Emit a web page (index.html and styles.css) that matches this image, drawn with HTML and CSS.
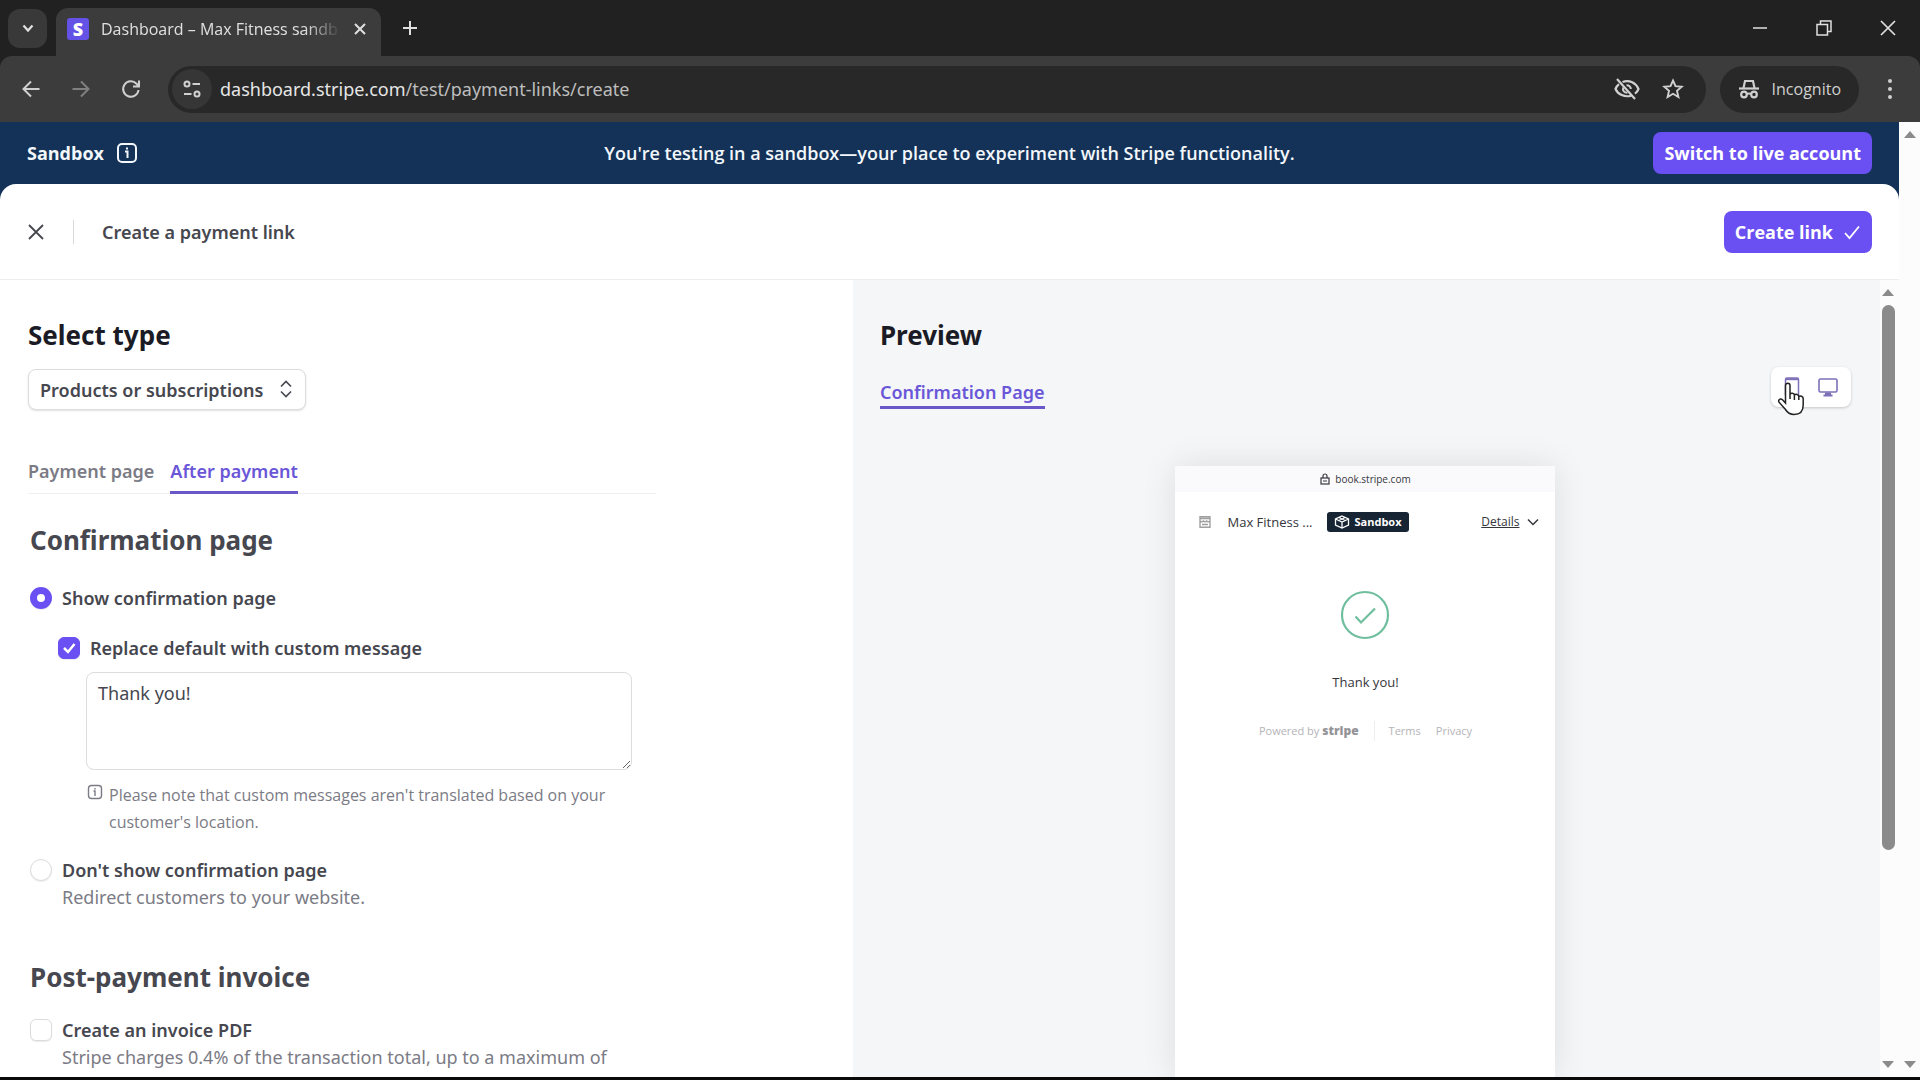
FILE: index.html
```html
<!DOCTYPE html>
<html lang="en">
<head>
    <meta charset="UTF-8">
    <meta name="viewport" content="width=device-width, initial-scale=1.0">
    <title>Dashboard – Max Fitness sandbox</title>
    <link rel="stylesheet" href="styles.css">
</head>
<body>
    <!-- browser tabs -->
    <div class="tab-strip">
        <button class="tab-search" aria-label="Search tabs">
            <svg width="14" height="14" viewBox="0 0 14 14"><path d="M2.500 4.500l4.500 5 4.500-5" stroke-width="2.200"/></svg>
        </button>
        <div class="browser-tab">
            <span class="favicon">S</span>
            <span class="tab-title">Dashboard – Max Fitness sandb</span>
            <button class="icon-btn" aria-label="Close tab">
                <svg width="14" height="14" viewBox="0 0 14 14"><path d="M2 2l10 10M12 2L2 12" stroke-width="2"/></svg>
            </button>
        </div>
        <button class="icon-btn new-tab" aria-label="New tab">
            <svg width="16" height="16" viewBox="0 0 16 16"><path d="M8 1v14M1 8h14" stroke-width="2"/></svg>
        </button>
        <div class="window-buttons">
            <button class="icon-btn" aria-label="Minimize">
                <svg width="16" height="16" viewBox="0 0 16 16"><path d="M1 8h14" stroke-width="1.500"/></svg>
            </button>
            <button class="icon-btn" aria-label="Restore">
                <svg width="16" height="16" viewBox="0 0 16 16"><path d="M1 4.500h10.500V15H1zM4.500 4.500V1H15v10.500h-3.500" stroke-width="1.500"/></svg>
            </button>
            <button class="icon-btn" aria-label="Close">
                <svg width="16" height="16" viewBox="0 0 16 16"><path d="M1 1l14 14M15 1L1 15" stroke-width="1.700"/></svg>
            </button>
        </div>
    </div>

    <!-- browser toolbar -->
    <div class="toolbar">
        <button class="icon-btn" aria-label="Back">
            <svg width="20" height="20" viewBox="0 0 20 20"><path d="M18.500 10H2.500M10 2.500L2.500 10l7.500 7.500" stroke-width="2"/></svg>
        </button>
        <button class="icon-btn dim" aria-label="Forward">
            <svg width="20" height="20" viewBox="0 0 20 20"><path d="M1.500 10h16M10 2.500l7.500 7.500-7.500 7.500" stroke-width="2"/></svg>
        </button>
        <button class="icon-btn" aria-label="Reload">
            <svg width="20" height="20" viewBox="0 0 20 20"><path d="M17.500 11a7.700 7.700 0 1 1-2-6.200L18 7.500M18 1.500v6h-6" stroke-width="2"/></svg>
        </button>
        <div class="address-bar">
            <button class="site-info" aria-label="Site information">
                <svg width="20" height="20" viewBox="0 0 20 20"><circle cx="5" cy="5" r="2.500" stroke-width="2"/><path d="M10.500 5H18M2 15h7.500" stroke-width="2"/><circle cx="15" cy="15" r="2.500" stroke-width="2"/></svg>
            </button>
            <span class="url">dashboard.stripe.com<span class="url-path">/test/payment-links/create</span></span>
            <button class="icon-btn" aria-label="Third-party cookies blocked">
                <svg width="26" height="24" viewBox="0 0 26 24"><path d="M3 2l18 20M8.500 5C15.500 2.500 22 6 24.500 12c-.8 2-2 3.500-3.500 4.700M17 18.700C10.500 20.500 4 17.500 1.500 12 2.300 10 3.500 8.400 5 7.200" stroke-width="2.200"/><path d="M12.500 8.200c2.500-.2 4.300 1.500 4.300 3.800M9.200 10.500c-1 3 1.300 5.500 4.200 5.300" stroke-width="2"/></svg>
            </button>
            <button class="icon-btn" aria-label="Bookmark this page">
                <svg width="22" height="22" viewBox="0 0 22 22"><path d="M11 2.500l2.500 5.700 6.200.6-4.700 4.100 1.400 6.100L11 15.800 5.600 19 7 12.900 2.300 8.800l6.200-.6z" stroke-width="1.900"/></svg>
            </button>
        </div>
        <div class="incognito">
            <svg width="22" height="20" viewBox="0 0 22 20"><path d="M1 9.500h20" stroke-width="2.200"/><path d="M5.500 9L7 2h8l1.500 7" stroke-width="2.200"/><circle cx="6" cy="15.500" r="2.800" stroke-width="2.200"/><circle cx="16" cy="15.500" r="2.800" stroke-width="2.200"/><path d="M8.800 15q2.200-1.200 4.400 0" stroke-width="2"/></svg>
            Incognito
        </div>
        <button class="icon-btn menu" aria-label="Menu">
            <svg width="6" height="22" viewBox="0 0 6 22"><g class="solid"><circle cx="3" cy="3" r="2"/><circle cx="3" cy="11" r="2"/><circle cx="3" cy="19" r="2"/></g></svg>
        </button>
    </div>

    <div class="viewport">
        <div class="page">
            <div class="banner">
                <div class="banner-label">
                    Sandbox
                    <svg width="22" height="22" viewBox="0 0 22 22"><rect x="2" y="2" width="18" height="18" rx="4" stroke-width="2"/><path d="M9 9.500h2.500V16M11 5.500v2" stroke-width="2"/></svg>
                </div>
                <p class="banner-text">You're testing in a sandbox—your place to experiment with Stripe functionality.</p>
                <button class="primary-btn">Switch to live account</button>
            </div>

            <main class="sheet">
                <header class="sheet-header">
                    <button class="icon-btn close-sheet" aria-label="Close">
                        <svg width="16" height="16" viewBox="0 0 16 16"><path d="M1 1l14 14M15 1L1 15" stroke-width="1.800"/></svg>
                    </button>
                    <h1>Create a payment link</h1>
                    <button class="primary-btn">Create link
                        <svg width="18" height="18" viewBox="0 0 18 18"><path d="M2 10l4.500 5L16 3.500" stroke-width="1.800"/></svg>
                    </button>
                </header>

                <div class="columns">
                    <section class="settings">
                        <h2><label for="type">Select type</label></h2>
                        <div class="select-wrap">
                            <select id="type">
                                <option>Products or subscriptions</option>
                            </select>
                            <svg class="select-arrows" width="14" height="18" viewBox="0 0 14 18"><path d="M2 6.500l5-5 5 5M2 11.500l5 5 5-5" stroke-width="1.600"/></svg>
                        </div>

                        <nav class="tabs">
                            <a href="#payment-page">Payment page</a>
                            <a href="#after-payment" class="active">After payment</a>
                        </nav>

                        <div class="group">
                            <h3>Confirmation page</h3>
                            <div class="option">
                                <input type="radio" name="confirmation" id="show" checked>
                                <label for="show">Show confirmation page</label>
                            </div>
                            <div class="nested">
                                <div class="option">
                                    <input type="checkbox" id="custom" checked>
                                    <label for="custom">Replace default with custom message</label>
                                </div>
                                <textarea aria-label="Custom message">Thank you!</textarea>
                                <div class="note">
                                    <svg width="16" height="16" viewBox="0 0 16 16"><rect x="1.500" y="1.500" width="13" height="13" rx="3" stroke-width="1.400"/><path d="M6.500 7H8v5M8 4v1.500" stroke-width="1.400"/></svg>
                                    <p>Please note that custom messages aren't translated based on your customer's location.</p>
                                </div>
                            </div>
                            <div class="option">
                                <input type="radio" name="confirmation" id="hide">
                                <label for="hide">Don't show confirmation page</label>
                            </div>
                            <p class="hint">Redirect customers to your website.</p>
                        </div>

                        <div class="group invoice">
                            <h3>Post-payment invoice</h3>
                            <div class="option">
                                <input type="checkbox" id="invoice">
                                <label for="invoice">Create an invoice PDF</label>
                            </div>
                            <p class="hint">Stripe charges 0.4% of the transaction total, up to a maximum of</p>
                        </div>
                    </section>

                    <section class="preview">
                        <h2>Preview</h2>
                        <div class="preview-bar">
                            <nav class="tabs preview-tabs">
                                <a href="#confirmation" class="active">Confirmation Page</a>
                            </nav>
                            <div class="device-toggle">
                                <button class="icon-btn" aria-label="Mobile preview">
                                    <svg width="16" height="20" viewBox="0 0 16 20"><rect x="1.500" y="1" width="13" height="18" rx="1.500" stroke-width="1.500"/><path d="M2 2.200h12" stroke-width="2"/></svg>
                                </button>
                                <button class="icon-btn" aria-label="Desktop preview">
                                    <svg width="20" height="20" viewBox="0 0 20 20"><rect x="1" y="2" width="18" height="13" rx="1.500" stroke-width="1.600"/><path d="M7 16.500h6M5.500 18.500h9" stroke-width="2"/></svg>
                                </button>
                                <svg class="pointer" width="28" height="34" viewBox="0 0 28 34"><path d="M8.500 21V3.500c0-3 4.500-3 4.500 0v9c.3-1.800 4.300-1.700 4.400.6 1.200-1.400 4.300-.9 4.400 1.300 1.500-1 4.400-.2 4.400 2.200V23c0 6-3.400 9.500-9.200 9.500-4.500 0-6.500-1.700-8.500-5L2 20.200c-1.200-2.500 1.500-4.200 3.500-2.400zM13 12v5M17.400 13v5M21.800 14.500V18"/></svg>
                            </div>
                        </div>

                        <div class="phone">
                            <div class="phone-url">
                                <svg width="10" height="12" viewBox="0 0 10 12"><rect x="1" y="5" width="8" height="6" stroke-width="1.200"/><path d="M3 5V3a2 2 0 0 1 4 0v2M3 8h4" stroke-width="1.200"/></svg>
                                book.stripe.com
                            </div>
                            <div class="phone-header">
                                <svg class="shop-icon" width="12" height="12" viewBox="0 0 12 12"><path d="M1 .7h10v3.500q0 1.600-1.700 1.600T7.600 4.200q0 1.600-1.600 1.600T4.400 4.200q0 1.600-1.700 1.600T1 4.200zM1 5v6.300h10V5M1 2.500h10M3 8.500h6" stroke-width="1.400"/></svg>
                                <span class="shop">Max Fitness ...</span>
                                <span class="badge">
                                    <svg width="16" height="14" viewBox="0 0 16 14"><path d="M8 1l6.500 3v6L8 13l-6.500-3V4zM1.500 4L8 7l6.500-3M8 7v6M5 2.500l6 3M11 2.500l-6 3" stroke-width="1.300"/></svg>
                                    Sandbox
                                </span>
                                <a href="#details">Details</a>
                                <svg width="12" height="8" viewBox="0 0 12 8"><path d="M1 1.500l5 5 5-5" stroke-width="1.500"/></svg>
                            </div>
                            <svg class="success" width="50" height="50" viewBox="0 0 50 50"><circle cx="25" cy="25" r="23" stroke-width="2.200"/><path d="M15.500 26.500l5.500 6 14-14" stroke-width="2.200"/></svg>
                            <p class="thanks">Thank you!</p>
                            <div class="phone-footer">
                                <span>Powered by <b>stripe</b></span>
                                <a class="terms" href="#terms">Terms</a>
                                <a href="#privacy">Privacy</a>
                            </div>
                        </div>
                    </section>

                    <div class="scrollbar">
                        <svg width="12" height="7" viewBox="0 0 12 7"><path class="arrow" d="M0 7l6-7 6 7z"/></svg>
                        <div class="track"><div class="thumb"></div></div>
                        <svg width="12" height="7" viewBox="0 0 12 7"><path class="arrow" d="M0 0l6 7 6-7z"/></svg>
                    </div>
                </div>
            </main>
        </div>
        <div class="scrollbar outer">
            <svg width="12" height="7" viewBox="0 0 12 7"><path class="arrow" d="M0 7l6-7 6 7z"/></svg>
            <div class="track"></div>
            <svg width="12" height="7" viewBox="0 0 12 7"><path class="arrow" d="M0 0l6 7 6-7z"/></svg>
        </div>
    </div>
</body>
</html>
```

FILE: styles.css
```css
* {
    box-sizing: border-box;
}
body {
    margin: 0;
    height: 100vh;
    display: flex;
    flex-direction: column;
    overflow: hidden;
    font-family: "Noto Sans", "Open Sans", sans-serif;
    font-size: 18px;
    line-height: 28px;
    color: #46474f;
    background-color: #212121;
    border-bottom: 3px solid #0a0a0a;
}
h1, h2, h3, p {
    margin: 0;
}
a {
    color: inherit;
    text-decoration: none;
}
button, select, textarea {
    font: inherit;
    color: inherit;
    border: none;
}
button {
    padding: 0;
    cursor: pointer;
}
svg {
    display: block;
    flex: none;
    fill: none;
    stroke: currentColor;
}
.solid {
    fill: currentColor;
    stroke: none;
}
.icon-btn {
    display: flex;
    align-items: center;
    justify-content: center;
    background: none;
}

/* browser */
.tab-strip {
    display: flex;
    align-items: center;
    height: 56px;
    padding-left: 8px;
    color: #e0e0e0;
    flex: none;
    font-family: "Open Sans", sans-serif;
}
.tab-search {
    display: flex;
    align-items: center;
    justify-content: center;
    width: 39px;
    height: 39px;
    border-radius: 12px;
    background-color: #393939;
    color: #e0e0e0;
}
.browser-tab {
    display: flex;
    align-items: center;
    gap: 12px;
    align-self: flex-end;
    width: 325px;
    height: 48px;
    margin-left: 9px;
    padding: 0 14px 6px 11px;
    border-radius: 12px 12px 0 0;
    background-color: #3c3c3c;
}
.favicon {
    width: 22px;
    height: 22px;
    border-radius: 3px;
    background-color: #6352e5;
    color: #fff;
    font-size: 18px;
    font-weight: 800;
    line-height: 22px;
    text-align: center;
}
.tab-title {
    flex: 1;
    font-size: 16px;
    white-space: nowrap;
    -webkit-mask-image: linear-gradient(90deg, #000 85%, transparent);
    mask-image: linear-gradient(90deg, #000 85%, transparent);
}
.new-tab {
    margin-left: 21px;
}
.window-buttons {
    display: flex;
    gap: 48px;
    margin-left: auto;
    padding-right: 24px;
}
.toolbar {
    display: flex;
    align-items: center;
    height: 66px;
    padding: 0 27px 0 20px;
    background-color: #3c3c3c;
    border-radius: 12px 12px 0 0;
    color: #d0d0d0;
    flex: none;
}
.toolbar > .icon-btn {
    width: 22px;
    margin-right: 28px;
}
.toolbar > .dim {
    color: #808080;
}
.address-bar {
    flex: 1;
    display: flex;
    align-items: center;
    gap: 22px;
    height: 47px;
    margin-left: -2px;
    padding: 0 22px 0 4px;
    border-radius: 24px;
    background-color: #282828;
}
.site-info {
    display: flex;
    align-items: center;
    justify-content: center;
    width: 40px;
    height: 40px;
    border-radius: 20px;
    background-color: #363636;
}
.url {
    flex: 1;
    margin-left: -14px;
    color: #e6e6e6;
}
.url-path {
    color: #bdbdbd;
}
.incognito {
    display: flex;
    align-items: center;
    gap: 12px;
    height: 47px;
    margin: 0 28px 0 14px;
    padding: 0 18px;
    border-radius: 24px;
    background-color: #282828;
    font-family: "Open Sans", sans-serif;
    font-size: 16px;
}
.toolbar > .menu {
    width: 6px;
    margin-right: 0;
}

/* page */
.viewport {
    flex: 1;
    display: flex;
    min-height: 0;
    background-color: #fcfcfd;
}
.page {
    flex: 1;
    display: flex;
    flex-direction: column;
    min-width: 0;
    background-color: #143257;
}
.banner {
    display: grid;
    grid-template-columns: 1fr auto 1fr;
    align-items: center;
    height: 62px;
    padding: 0 27px;
    color: #f2f7fc;
    flex: none;
    font-family: "Open Sans", sans-serif;
    font-weight: 600;
}
.banner-label {
    display: flex;
    align-items: center;
    gap: 12px;
    font-weight: 700;
}
.banner > .primary-btn {
    justify-self: end;
}
.primary-btn {
    display: flex;
    align-items: center;
    gap: 10px;
    height: 42px;
    padding: 0 11px;
    border-radius: 8px;
    background-color: #6a50f2;
    color: #fff;
    font-family: "Open Sans", sans-serif;
    font-weight: 700;
}
.sheet {
    flex: 1;
    display: flex;
    flex-direction: column;
    min-height: 0;
    border-radius: 16px 16px 0 0;
    background-color: #fff;
    overflow: hidden;
}
.sheet-header {
    display: flex;
    align-items: center;
    height: 96px;
    padding: 0 27px;
    border-bottom: 1px solid #eeeef0;
    flex: none;
}
.close-sheet {
    width: 18px;
}
.sheet-header h1 {
    flex: 1;
    margin-left: 28px;
    font-size: 18px;
    font-weight: 600;
    line-height: 24px;
    padding-left: 28px;
    border-left: 1px solid #d8d8dc;
}
.columns {
    flex: 1;
    display: grid;
    grid-template-columns: 49fr 59fr 19px;
    min-height: 0;
}
h2, h3 {
    font-size: 26px;
    font-weight: 700;
    line-height: 34px;
}
h2 {
    color: #1a1b25;
}
.settings {
    padding: 38px 27px 0 28px;
    overflow: hidden;
}
.select-wrap {
    position: relative;
    width: 278px;
    margin-top: 17px;
}
select {
    display: block;
    width: 100%;
    height: 41px;
    padding: 0 11px;
    appearance: none;
    border: 1px solid #dcdce0;
    border-radius: 8px;
    background-color: #fff;
    box-shadow: 0 1px 2px rgba(0, 0, 0, 0.12);
    font-weight: 600;
}
.select-arrows {
    position: absolute;
    right: 13px;
    top: 11px;
    pointer-events: none;
}
.tabs {
    display: flex;
    gap: 16px;
    font-weight: 600;
}
.tabs a {
    padding-bottom: 6px;
    border-bottom: 3px solid transparent;
    color: #7b7b85;
}
.tabs .active {
    color: #6a57d8;
    border-color: #6a57c8;
}
.settings .tabs {
    width: 628px;
    margin-top: 47px;
    box-shadow: inset 0 -1px 0 #f0f0f3;
}
.group {
    margin-top: 29px;
    padding-left: 2px;
}
.option {
    display: flex;
    align-items: center;
    gap: 10px;
    margin-top: 22px;
    font-weight: 600;
}
h3 + .option {
    margin-top: 27px;
}
.nested + .option {
    margin-top: 20px;
}
.invoice h3 + .option {
    margin-top: 22px;
}
input {
    appearance: none;
    flex: none;
    width: 22px;
    height: 22px;
    margin: 0;
    border: 1px solid #dcdce0;
    background-color: #fff;
    box-shadow: 0 1px 1px rgba(0, 0, 0, 0.08);
}
input[type="radio"] {
    border-radius: 50%;
}
input[type="radio"]:checked {
    border: 7px solid #6a50f2;
}
input[type="checkbox"] {
    border-radius: 6px;
}
input[type="checkbox"]:checked {
    border-color: #6a50f2;
    background: #6a50f2 url("data:image/svg+xml,%3Csvg xmlns='http://www.w3.org/2000/svg' viewBox='0 0 20 20' fill='none' stroke='white' stroke-width='2.500'%3E%3Cpath d='M5 10l4 4 6.500-8'/%3E%3C/svg%3E") center / 20px no-repeat;
}
.nested {
    padding-left: 28px;
}
textarea {
    display: block;
    width: 546px;
    height: 98px;
    margin: 10px 0 0 28px;
    padding: 6px 11px;
    border: 1px solid #dcdce0;
    border-radius: 8px;
    resize: both;
}
.note {
    display: flex;
    align-items: flex-start;
    gap: 6px;
    width: 546px;
    margin: 12px 0 0 29px;
    color: #7b7b85;
    font-family: "Open Sans", sans-serif;
    font-size: 16px;
    line-height: 27px;
}
.note svg {
    margin-top: 2px;
}
.hint {
    margin-left: 32px;
    color: #7b7b85;
    line-height: 27px;
    white-space: nowrap;
}
.invoice {
    margin-top: 49px;
}

/* preview */
.preview {
    display: flex;
    flex-direction: column;
    min-height: 0;
    padding: 38px 29px 0 27px;
    background-color: #f5f6f8;
}
.preview-bar {
    display: flex;
    justify-content: space-between;
    margin-top: 15px;
}
.preview-tabs {
    align-items: flex-start;
    padding-top: 11px;
}
.preview-tabs a {
    padding-bottom: 0;
}
.device-toggle {
    position: relative;
    display: flex;
    align-items: center;
    justify-content: center;
    gap: 18px;
    width: 80px;
    height: 40px;
    border-radius: 8px;
    background-color: #fff;
    box-shadow: 0 1px 3px rgba(0, 0, 0, 0.2);
    color: #7d70b8;
}
.pointer {
    position: absolute;
    left: 6px;
    top: 15px;
    fill: #fff;
    stroke: #222;
    stroke-width: 1.500;
}
.phone {
    flex: 1;
    align-self: center;
    width: 380px;
    margin-top: 57px;
    background-color: #fff;
    box-shadow: 0 0 32px rgba(0, 0, 0, 0.1);
    font-family: "Open Sans", sans-serif;
    font-size: 13px;
    line-height: 20px;
    color: #35363c;
}
.phone-url {
    display: flex;
    align-items: center;
    justify-content: center;
    gap: 5px;
    height: 26px;
    background-color: #fafafc;
    font-size: 10px;
}
.phone-header {
    display: flex;
    align-items: center;
    height: 60px;
    padding: 0 16px 0 24px;
}
.shop-icon {
    color: #a0a0a0;
}
.shop {
    flex: none;
    margin: 0 15px 0 16px;
}
.badge {
    display: flex;
    align-items: center;
    gap: 4px;
    height: 20px;
    margin-right: auto;
    padding: 0 7px;
    border-radius: 3px;
    background-color: #172433;
    color: #fff;
    font-size: 11px;
    font-weight: 700;
}
.phone-header a {
    margin-right: 8px;
    font-size: 12px;
    text-decoration: underline;
}
.success {
    margin: 38px auto 0;
    color: #6fbf9f;
}
.thanks {
    margin-top: 32px;
    text-align: center;
}
.phone-footer {
    display: flex;
    justify-content: center;
    gap: 15px;
    margin-top: 29px;
    color: #b4b4b8;
    font-size: 11px;
}
.phone-footer b {
    color: #949498;
    font-size: 12px;
    font-weight: 800;
}
.terms {
    padding-left: 14px;
    border-left: 1px solid #eeeef0;
}

/* scrollbars */
.scrollbar {
    display: flex;
    flex-direction: column;
    align-items: center;
    padding: 9px 3px 9px 0;
    background-color: #fcfcfd;
    color: #8b8b8b;
}
.arrow {
    fill: currentColor;
    stroke: none;
}
.outer {
    width: 21px;
    padding-right: 0;
}
.track {
    flex: 1;
    margin: 9px 0;
}
.thumb {
    width: 13px;
    height: 73%;
    border-radius: 7px;
    background-color: #8b8b8b;
}
```
